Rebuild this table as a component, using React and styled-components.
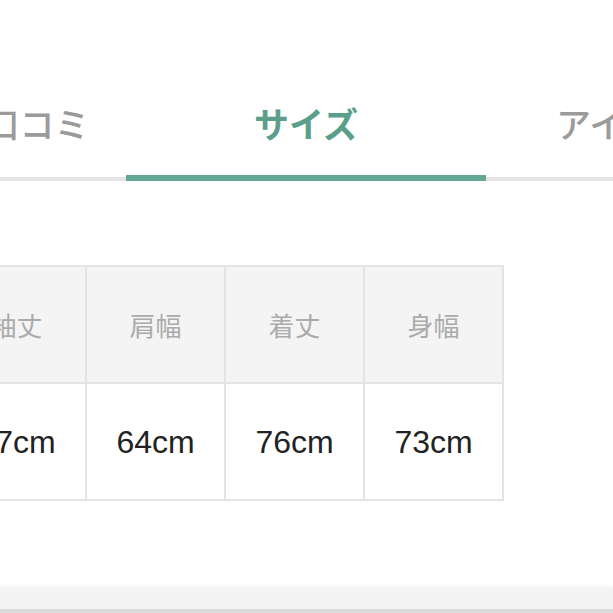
import styled, { createGlobalStyle } from "styled-components";

const GlobalStyle = createGlobalStyle`
  html, body {
    margin: 0;
    padding: 0;
    background: #ffffff;
    overflow: hidden;
  }
  body {
    font-family: "Noto Sans CJK JP", "Noto Sans", sans-serif;
  }
`;

const tabs = [
  { label: "口コミ", width: 178 },
  { label: "サイズ", width: 360, active: true },
  { label: "アイテム情報", grow: true },
];

const headers = ["袖丈", "肩幅", "着丈", "身幅"];
const values = ["57cm", "64cm", "76cm", "73cm"];

const App = () => {
  return (
    <Page>
      <GlobalStyle />
      <TabBar>
        {tabs.map((t) => (
          <Tab key={t.label} $width={t.width} $grow={t.grow} $active={t.active}>
            {t.label}
          </Tab>
        ))}
      </TabBar>

      <TableWrap>
        <SizeTable>
          <tbody>
            <tr>
              {headers.map((h) => (
                <HeadCell key={h}>{h}</HeadCell>
              ))}
            </tr>
            <tr>
              {values.map((v, i) => (
                <ValueCell key={i}>{v}</ValueCell>
              ))}
            </tr>
          </tbody>
        </SizeTable>
      </TableWrap>

      <Footer />
    </Page>
  );
};

const Page = styled.div`
  width: 613px;
  height: 613px;
  display: flex;
  flex-direction: column;
  overflow: hidden;
`;

const TabBar = styled.div`
  display: flex;
  margin-top: 70px;
  margin-left: -52px;
  width: 665px;
  box-shadow: inset 0 -4px 0 #e4e4e4;
`;

const Tab = styled.div`
  box-sizing: border-box;
  height: 111px;
  width: ${(p) => (p.$width ? `${p.$width}px` : "auto")};
  flex: ${(p) => (p.$grow ? "1" : "none")};
  padding-top: 33px;
  padding-left: ${(p) => (p.$grow ? "70px" : "0")};
  line-height: 40px;
  text-align: ${(p) => (p.$grow ? "left" : "center")};
  white-space: nowrap;
  font-size: 35px;
  font-weight: ${(p) => (p.$active ? 700 : 500)};
  color: ${(p) => (p.$active ? "#5b9f8a" : "#9b9b9b")};
  border-bottom: 6px solid ${(p) => (p.$active ? "#62a894" : "transparent")};
`;

const TableWrap = styled.div`
  margin-top: 84px;
  margin-left: -54px;
`;

const SizeTable = styled.table`
  border-collapse: collapse;
  table-layout: fixed;
`;

const HeadCell = styled.td`
  box-sizing: border-box;
  width: 139px;
  height: 117px;
  padding: 0;
  border: 2px solid #e4e4e4;
  background: #f4f4f4;
  color: #ababab;
  text-align: center;
  font-family: "Noto Sans CJK JP", sans-serif;
  font-size: 26px;
  font-weight: 400;
`;

const ValueCell = styled.td`
  box-sizing: border-box;
  width: 139px;
  height: 117px;
  padding: 2px 0 0;
  border: 2px solid #e4e4e4;
  background: #ffffff;
  color: #222222;
  text-align: center;
  font-family: "Liberation Sans", Arial, sans-serif;
  font-size: 32px;
`;

const Footer = styled.div`
  margin-top: auto;
  height: 22px;
  background: #f4f4f4;
  border-bottom: 4px solid #dadada;
  box-shadow: 0 -2px 3px rgba(0, 0, 0, 0.03);
`;

export default App;
